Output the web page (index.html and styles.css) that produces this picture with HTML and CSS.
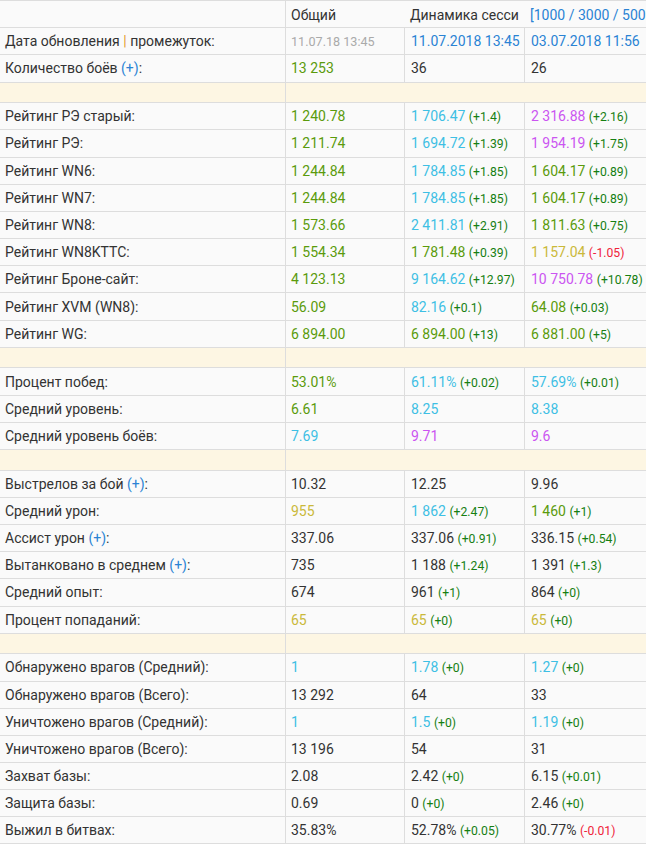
FILE: index.html
```html
<!DOCTYPE html>
<html lang="ru">
<head>
<meta charset="utf-8">
<title>Статистика</title>
<link rel="stylesheet" href="styles.css">
</head>
<body>
<div class="wrap">
<table class="stats">
<colgroup><col class="c1"><col class="c2"><col class="c3"><col class="c4"></colgroup>
<thead>
<tr class="head"><th></th><th class="b">Общий</th><th class="nob clip">Динамика сесси</th><th class="nob"><span class="lnk">[1000 / 3000 / 5000]</span></th></tr>
</thead>
<tbody>
<tr><td>Дата обновления <span class="pipe">|</span> промежуток:</td><td><span class="gr">11.07.18 13:45</span></td><td><span class="lnk">11.07.2018 13:45</span></td><td><span class="lnk">03.07.2018 11:56</span></td></tr>
<tr><td>Количество боёв <span class="lnk">(+)</span>:</td><td><span class="g">13 253</span></td><td>36</td><td>26</td></tr>
<tr class="sp"><td></td><td colspan="3"></td></tr>
<tr><td>Рейтинг РЭ старый:</td><td><span class="g">1 240.78</span></td><td><span class="c">1 706.47</span> <span class="d">(+1.4)</span></td><td><span class="p">2 316.88</span> <span class="d">(+2.16)</span></td></tr>
<tr><td>Рейтинг РЭ:</td><td><span class="g">1 211.74</span></td><td><span class="c">1 694.72</span> <span class="d">(+1.39)</span></td><td><span class="p">1 954.19</span> <span class="d">(+1.75)</span></td></tr>
<tr><td>Рейтинг WN6:</td><td><span class="g">1 244.84</span></td><td><span class="c">1 784.85</span> <span class="d">(+1.85)</span></td><td><span class="g">1 604.17</span> <span class="d">(+0.89)</span></td></tr>
<tr><td>Рейтинг WN7:</td><td><span class="g">1 244.84</span></td><td><span class="c">1 784.85</span> <span class="d">(+1.85)</span></td><td><span class="g">1 604.17</span> <span class="d">(+0.89)</span></td></tr>
<tr><td>Рейтинг WN8:</td><td><span class="g">1 573.66</span></td><td><span class="c">2 411.81</span> <span class="d">(+2.91)</span></td><td><span class="g">1 811.63</span> <span class="d">(+0.75)</span></td></tr>
<tr><td>Рейтинг WN8KTTC:</td><td><span class="g">1 554.34</span></td><td><span class="g">1 781.48</span> <span class="d">(+0.39)</span></td><td><span class="y">1 157.04</span> <span class="r">(-1.05)</span></td></tr>
<tr><td>Рейтинг Броне-сайт:</td><td><span class="g">4 123.13</span></td><td><span class="c">9 164.62</span> <span class="d">(+12.97)</span></td><td><span class="p">10 750.78</span> <span class="d">(+10.78)</span></td></tr>
<tr><td>Рейтинг XVM (WN8):</td><td><span class="g">56.09</span></td><td><span class="c">82.16</span> <span class="d">(+0.1)</span></td><td><span class="g">64.08</span> <span class="d">(+0.03)</span></td></tr>
<tr><td>Рейтинг WG:</td><td><span class="g">6 894.00</span></td><td><span class="g">6 894.00</span> <span class="d">(+13)</span></td><td><span class="g">6 881.00</span> <span class="d">(+5)</span></td></tr>
<tr class="sp"><td></td><td colspan="3"></td></tr>
<tr><td>Процент побед:</td><td><span class="g">53.01%</span></td><td><span class="c">61.11%</span> <span class="d">(+0.02)</span></td><td><span class="c">57.69%</span> <span class="d">(+0.01)</span></td></tr>
<tr><td>Средний уровень:</td><td><span class="g">6.61</span></td><td><span class="c">8.25</span></td><td><span class="c">8.38</span></td></tr>
<tr><td>Средний уровень боёв:</td><td><span class="c">7.69</span></td><td><span class="p">9.71</span></td><td><span class="p">9.6</span></td></tr>
<tr class="sp"><td></td><td colspan="3"></td></tr>
<tr><td>Выстрелов за бой <span class="lnk">(+)</span>:</td><td>10.32</td><td>12.25</td><td>9.96</td></tr>
<tr><td>Средний урон:</td><td><span class="y">955</span></td><td><span class="c">1 862</span> <span class="d">(+2.47)</span></td><td><span class="g">1 460</span> <span class="d">(+1)</span></td></tr>
<tr><td>Ассист урон <span class="lnk">(+)</span>:</td><td>337.06</td><td>337.06 <span class="d">(+0.91)</span></td><td>336.15 <span class="d">(+0.54)</span></td></tr>
<tr><td>Вытанковано в среднем <span class="lnk">(+)</span>:</td><td>735</td><td>1 188 <span class="d">(+1.24)</span></td><td>1 391 <span class="d">(+1.3)</span></td></tr>
<tr><td>Средний опыт:</td><td>674</td><td>961 <span class="d">(+1)</span></td><td>864 <span class="d">(+0)</span></td></tr>
<tr><td>Процент попаданий:</td><td><span class="y">65</span></td><td><span class="y">65</span> <span class="d">(+0)</span></td><td><span class="y">65</span> <span class="d">(+0)</span></td></tr>
<tr class="sp"><td></td><td colspan="3"></td></tr>
<tr><td>Обнаружено врагов (Средний):</td><td><span class="c">1</span></td><td><span class="c">1.78</span> <span class="d">(+0)</span></td><td><span class="c">1.27</span> <span class="d">(+0)</span></td></tr>
<tr><td>Обнаружено врагов (Всего):</td><td>13 292</td><td>64</td><td>33</td></tr>
<tr><td>Уничтожено врагов (Средний):</td><td><span class="c">1</span></td><td><span class="c">1.5</span> <span class="d">(+0)</span></td><td><span class="c">1.19</span> <span class="d">(+0)</span></td></tr>
<tr><td>Уничтожено врагов (Всего):</td><td>13 196</td><td>54</td><td>31</td></tr>
<tr><td>Захват базы:</td><td>2.08</td><td>2.42 <span class="d">(+0)</span></td><td>6.15 <span class="d">(+0.01)</span></td></tr>
<tr><td>Защита базы:</td><td>0.69</td><td>0 <span class="d">(+0)</span></td><td>2.46 <span class="d">(+0)</span></td></tr>
<tr class="last"><td>Выжил в битвах:</td><td>35.83%</td><td>52.78% <span class="d">(+0.05)</span></td><td>30.77% <span class="r">(-0.01)</span></td></tr>
</tbody>
</table>
</div>
</body>
</html>
```

FILE: styles.css
```css
html, body {
  margin: 0;
  padding: 0;
  background: #ffffff;
  overflow: hidden;
}

.wrap {
  width: 646px;
  overflow: hidden;
}

.stats {
  border-collapse: separate;
  border-spacing: 0;
  table-layout: fixed;
  width: 664px;
  font-family: Roboto, "Noto Sans", "Liberation Sans", sans-serif;
  font-size: 14px;
  color: #333333;
}

.c1 { width: 285px; }
.c2 { width: 119px; }
.c3 { width: 120px; }
.c4 { width: 140px; }

.stats th,
.stats td {
  padding: 3px 5px 3px 5px;
  line-height: 20px;
  height: 27.2px;
  box-sizing: border-box;
  text-align: left;
  vertical-align: middle;
  white-space: nowrap;
  background: #fafafa;
  border-top: 1px solid #dddddd;
  font-weight: 400;
}

.stats td + td,
.stats th + th {
  border-left: 1px solid #dddddd;
}

.stats th.nob {
  border-left: none;
  padding-left: 6px;
}

.stats th.clip {
  overflow: hidden;
  text-overflow: clip;
}

.head th {
  padding-top: 4px;
  padding-bottom: 2px;
}

.last td {
  border-bottom: 1px solid #dddddd;
}

.stats tr.sp td {
  background: #fdf6e3;
  padding: 0;
  height: 20.6px;
  line-height: 0;
}

.stats tr.sp td + td {
  border-left: 1px solid #dddddd;
}

.stats td:nth-child(3),
.stats td:nth-child(4) {
  padding-left: 6px;
}

.pipe { color: #e39b2e; }
.lnk { color: #2a83d4; }
.gr { color: #aaaaaa; font-size: 12.6px; line-height: 1; }
.g { color: #5a9b0c; }
.c { color: #3ebfe4; }
.p { color: #cb55f1; }
.y { color: #cab93a; }
.d { color: #167f12; font-size: 12.2px; line-height: 1; }
.r { color: #f0233a; font-size: 12.2px; line-height: 1; }
```
